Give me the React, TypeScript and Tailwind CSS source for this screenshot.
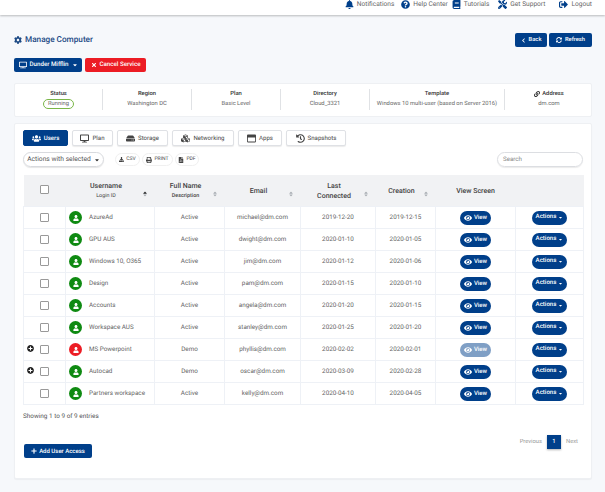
import { ReactNode } from 'react';
import {
  FaBell,
  FaBook,
  FaChevronLeft,
  FaCaretDown,
  FaCog,
  FaCubes,
  FaDesktop,
  FaEye,
  FaFilePdf,
  FaHdd,
  FaHistory,
  FaLink,
  FaPlus,
  FaPlusCircle,
  FaPrint,
  FaQuestionCircle,
  FaRegWindowMaximize,
  FaSignOutAlt,
  FaSort,
  FaSortUp,
  FaSyncAlt,
  FaTimes,
  FaTools,
  FaTv,
  FaUser,
  FaUsers,
  FaDownload,
} from 'react-icons/fa';

const navy = 'bg-[#003f8a]';

const rows = [
  { name: 'AzureAd', desc: 'Active', email: 'michael@dm.com', last: '2019-12-20', created: '2019-12-15' },
  { name: 'GPU AUS', desc: 'Active', email: 'dwight@dm.com', last: '2020-01-10', created: '2020-01-05' },
  { name: 'Windows 10, O365', desc: 'Active', email: 'jim@dm.com', last: '2020-01-12', created: '2020-01-06' },
  { name: 'Design', desc: 'Active', email: 'pam@dm.com', last: '2020-01-15', created: '2020-01-10' },
  { name: 'Accounts', desc: 'Active', email: 'angela@dm.com', last: '2020-01-20', created: '2020-01-15' },
  { name: 'Workspace AUS', desc: 'Active', email: 'stanley@dm.com', last: '2020-01-25', created: '2020-01-20' },
  { name: 'MS Powerpoint', desc: 'Demo', email: 'phyllis@dm.com', last: '2020-02-02', created: '2020-02-01', expand: true, red: true, faded: true },
  { name: 'Autocad', desc: 'Demo', email: 'oscar@dm.com', last: '2020-03-09', created: '2020-02-28', expand: true },
  { name: 'Partners workspace', desc: 'Active', email: 'kelly@dm.com', last: '2020-04-10', created: '2020-04-05' },
];

function TopLink({ icon, label, className }: { icon: ReactNode; label: string; className?: string }) {
  return (
    <span className={`flex items-center gap-[3px] ${className ?? ''}`}>
      <span className="text-[9px] text-[#003f8a]">{icon}</span>
      {label}
    </span>
  );
}

function InfoCell({ title, value, last }: { title: ReactNode; value: ReactNode; last?: boolean }) {
  return (
    <div className={`flex h-[21px] flex-col items-center justify-center whitespace-nowrap ${last ? '' : 'border-r border-[#e0e2e5]'}`}>
      <div className="text-[5.8px] font-medium leading-[10px] text-[#333]">{title}</div>
      <div className="text-[5.8px] leading-[10px] text-[#666]">{value}</div>
    </div>
  );
}

function Tab({ icon, label, active, width }: { icon: ReactNode; label: string; active?: boolean; width: string }) {
  return (
    <div
      className={`flex h-[16px] items-center justify-center gap-[3px] rounded-[2px] border text-[6.1px] ${width} ${
        active ? `${navy} border-[#003f8a] font-medium text-white` : 'border-[#dfe1e5] bg-white text-[#444] shadow-[0_1px_1px_rgba(0,0,0,0.08)]'
      }`}
    >
      <span className="text-[9px]">{icon}</span>
      <span className="pt-px">{label}</span>
    </div>
  );
}

function SortHead({ children, active }: { children: ReactNode; active?: boolean }) {
  return (
    <th className="relative border-0 pr-[8px] pt-[2px] font-medium text-[#444]">
      {children}
      <span className="absolute right-[7px] top-[16px] text-[6px] text-[#a8adb3]">
        {active ? (
          <span className="relative block">
            <FaSort />
            <FaSortUp className="absolute left-0 top-0 text-[#333]" />
          </span>
        ) : (
          <FaSort />
        )}
      </span>
    </th>
  );
}

function Checkbox() {
  return <span className="inline-block h-[9px] w-[9px] rounded-[1px] border border-[#999] bg-white" />;
}

export default function App() {
  return (
    <div className="h-[492px] w-[605px] overflow-hidden bg-[#f6f8fb] font-['Roboto',sans-serif] text-[#555] opacity-[0.999] [text-rendering:geometricPrecision]">
      <div className="flex h-[15px] items-start justify-end bg-white text-[6.6px] text-[#666] shadow-[0_1px_2px_rgba(0,0,0,0.25)]">
        <TopLink icon={<FaBell />} label="Notifications" className="mr-[7px]" />
        <TopLink icon={<FaQuestionCircle />} label="Help Center" className="mr-[4px]" />
        <TopLink icon={<FaBook />} label="Tutorials" className="mr-[9px]" />
        <TopLink icon={<FaTools />} label="Get Support" className="mr-[14px]" />
        <TopLink icon={<FaSignOutAlt />} label="Logout" className="mr-[13px]" />
      </div>

      <div className="pl-[14px] pr-[13px]">
        <div className="flex h-[43px] items-start justify-between pt-[18px]">
          <div className="mt-px flex items-center gap-[3px] text-[8.2px] font-medium text-[#1d4a85]">
            <FaCog className="text-[8px]" />
            Manage Computer
          </div>
          <div className="flex gap-[2px]">
            <div className={`flex h-[14px] w-[32px] items-center justify-center gap-[3px] rounded-[2px] ${navy} text-[5.8px] font-medium text-white`}>
              <FaChevronLeft className="text-[5px]" />
              Back
            </div>
            <div className={`flex h-[14px] w-[43px] items-center justify-center gap-[3px] rounded-[2px] ${navy} text-[5.8px] font-medium text-white`}>
              <FaSyncAlt className="text-[6px]" />
              Refresh
            </div>
          </div>
        </div>

        <div className="flex gap-[3px]">
          <div className={`flex h-[14px] w-[68px] items-center justify-center gap-[3px] rounded-[2px] ${navy} text-[6.2px] font-medium text-white`}>
            <FaTv className="text-[8px]" />
            Dunder Mifflin
            <FaCaretDown className="text-[6px]" />
          </div>
          <div className="flex h-[14px] w-[61px] items-center justify-center gap-[3px] rounded-[2px] bg-[#ec1c24] text-[6.2px] font-medium text-white">
            <FaTimes className="text-[6px]" />
            Cancel Service
          </div>
        </div>

        <div className="mt-[11px] grid h-[34px] grid-cols-[88px_89px_89px_89px_135px_88px] items-center rounded-[2px] border border-[#eef0f3] bg-white pb-[2px]">
          <InfoCell
            title="Status"
            value={<span className="inline-block rounded-full border border-[#7ab648] px-[4px] leading-[8px]">Running</span>}
          />
          <InfoCell title="Region" value="Washington DC" />
          <InfoCell title="Plan" value="Basic Level" />
          <InfoCell title="Directory" value="Cloud_3321" />
          <InfoCell title="Template" value="Windows 10 multi-user (based on Server 2016)" />
          <InfoCell
            last
            title={
              <span className="flex items-center gap-[2px]">
                <FaLink className="text-[6px]" />
                Address
              </span>
            }
            value="dm.com"
          />
        </div>

        <div className="mt-[6px] h-[356px] rounded-[2px] border border-[#eef0f3] bg-white px-[8px] pt-[6px] shadow-[0_1px_1px_rgba(0,0,0,0.04)]">
          <div className="flex gap-[4px]">
            <Tab active icon={<FaUsers />} label="Users" width="w-[45px]" />
            <Tab icon={<FaDesktop />} label="Plan" width="w-[41px]" />
            <Tab icon={<FaHdd />} label="Storage" width="w-[51px]" />
            <Tab icon={<FaCubes />} label="Networking" width="w-[62px]" />
            <Tab icon={<FaRegWindowMaximize />} label="Apps" width="w-[44px]" />
            <Tab icon={<FaHistory />} label="Snapshots" width="w-[60px]" />
          </div>

          <div className="mt-[6px] flex h-[15px] items-center">
            <div className="flex h-[15px] w-[81px] items-center justify-center gap-[3px] rounded-full border border-[#d8dade] text-[6.7px] text-[#555] shadow-[0_1px_1px_rgba(0,0,0,0.1)]">
              Actions with selected
              <FaCaretDown className="text-[6px] text-[#333]" />
            </div>
            <div className="ml-[11px] flex gap-[2px] text-[5px] text-[#444]">
              <span className="flex h-[13px] w-[25px] items-center justify-center gap-[2px] rounded-full border border-[#f0f0f0]">
                <FaDownload className="text-[5px]" />
                CSV
              </span>
              <span className="flex h-[13px] w-[31px] items-center justify-center gap-[2px] rounded-full border border-[#f0f0f0]">
                <FaPrint className="text-[6px]" />
                PRINT
              </span>
              <span className="flex h-[13px] w-[24px] items-center justify-center gap-[2px] rounded-full border border-[#f0f0f0]">
                <FaFilePdf className="text-[6px]" />
                PDF
              </span>
            </div>
            <div className="ml-auto flex h-[15px] w-[86px] items-center rounded-full border border-[#dcdee2] pl-[5px] text-[6.2px] text-[#888] shadow-[0_1px_1px_rgba(0,0,0,0.08)]">
              Search
            </div>
          </div>

          <table className="mt-[8px] w-[560px] table-fixed border-collapse text-center text-[6.3px] text-[#666]">
            <colgroup>
              <col className="w-[42px]" />
              <col className="w-[89px]" />
              <col className="w-[70px]" />
              <col className="w-[76px]" />
              <col className="w-[75px]" />
              <col className="w-[60px]" />
              <col className="w-[80px]" />
              <col className="w-[68px]" />
            </colgroup>
            <thead>
              <tr className="h-[31px] bg-[#f1f2f4] text-[7px] leading-[10.5px]">
                <th className="border-0 pt-[2px]">
                  <Checkbox />
                </th>
                <SortHead active>
                  Username
                  <div className="text-[5.4px] font-normal">Login ID</div>
                </SortHead>
                <SortHead>
                  Full Name
                  <div className="text-[5.4px]">Description</div>
                </SortHead>
                <SortHead>Email</SortHead>
                <SortHead>
                  Last
                  <br />
                  Connected
                </SortHead>
                <SortHead>Creation</SortHead>
                <th className="pt-[2px] font-medium text-[#444]">View Screen</th>
                <th />
              </tr>
            </thead>
            <tbody>
              {rows.map((row) => (
                <tr key={row.name} className="h-[22px] border border-[#eef1f6] [&>td]:pt-px">
                  <td className="relative border-r border-[#eef1f6]">
                    {row.expand && <FaPlusCircle className="absolute left-[3px] top-[6px] text-[7px] text-[#222]" />}
                    <span className="flex items-center justify-center">
                      <Checkbox />
                    </span>
                  </td>
                  <td className="border-r border-[#eef1f6] text-left">
                    <div className="flex items-center gap-[7px] pl-[3px]">
                      <span
                        className={`flex h-[13px] w-[13px] shrink-0 items-center justify-center rounded-full text-white ${
                          row.red ? 'bg-[#ec1c24]' : 'bg-[#0f8a12]'
                        }`}
                      >
                        <FaUser className="text-[6px]" />
                      </span>
                      <span className="whitespace-nowrap">{row.name}</span>
                    </div>
                  </td>
                  <td className="border-r border-[#eef1f6]">{row.desc}</td>
                  <td className="border-r border-[#eef1f6]">{row.email}</td>
                  <td className="border-r border-[#eef1f6]">{row.last}</td>
                  <td className="border-r border-[#eef1f6]">{row.created}</td>
                  <td className="border-r border-[#eef1f6]">
                    <span
                      className={`inline-flex h-[14px] w-[31px] items-center justify-center gap-[2px] rounded-full align-middle text-[6px] font-medium leading-none text-white ${
                        row.faded ? 'bg-[#7f9fc5]' : navy
                      }`}
                    >
                      <FaEye className="text-[8px]" />
                      View
                    </span>
                  </td>
                  <td>
                    <span className={`inline-flex h-[14px] w-[35px] items-center justify-center gap-[2px] rounded-full align-middle text-[6.1px] font-medium leading-none text-white ${navy}`}>
                      Actions
                      <FaCaretDown className="text-[5px]" />
                    </span>
                  </td>
                </tr>
              ))}
            </tbody>
          </table>

          <div className="mt-[7px] text-[6.4px] text-[#555]">Showing 1 to 9 of 9 entries</div>

          <div className="mt-[14px] flex items-start justify-between">
            <div className={`mt-[9px] flex h-[14px] w-[68px] items-center justify-center gap-[2px] rounded-[2px] ${navy} ml-px text-[6px] font-medium text-white`}>
              <FaPlus className="text-[6px]" />
              Add User Access
            </div>
            <div className="flex items-center text-[5.8px] text-[#999]">
              <span>Previous</span>
              <span className={`mx-[5px] flex h-[14px] w-[14px] items-center justify-center ${navy} font-medium text-white shadow-[0_1px_2px_rgba(0,0,0,0.3)]`}>
                1
              </span>
              <span className="mr-[5px]">Next</span>
            </div>
          </div>
        </div>
      </div>
    </div>
  );
}
